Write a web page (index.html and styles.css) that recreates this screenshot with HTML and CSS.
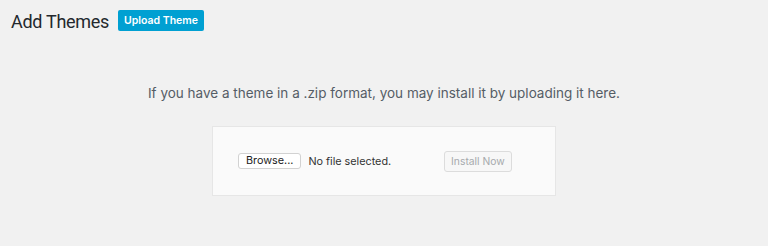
FILE: index.html
```html
<!DOCTYPE html>
<html lang="en">
<head>
  <meta charset="UTF-8">
  <title>Add Themes</title>
  <link rel="stylesheet" href="styles.css">
</head>
<body>
  <div class="wrap">
    <div class="page-head">
      <h1>Add Themes</h1>
      <a class="upload-btn" href="#">Upload Theme</a>
    </div>

    <!-- upload panel -->
    <div class="upload-theme">
      <p class="install-help">If you have a theme in a .zip format, you may install it by uploading it here.</p>
      <form class="upload-form">
        <span class="browse-btn">Browse...</span>
        <span class="file-name">No file selected.</span>
        <button class="install-btn" type="button" disabled>Install Now</button>
      </form>
    </div>
  </div>
</body>
</html>
```

FILE: styles.css
```css
body {
  margin: 0;
  background: #f1f1f1;
  font-family: Inter, "Noto Sans", Arial, sans-serif;
  color: #23282d;
  height: 246px;
  overflow: hidden;
}
.wrap {
  padding: 9px 11px 0 11px;
}
.page-head {
  display: flex;
  align-items: center;
  gap: 9px;
}
h1 {
  margin: 2px 0 0 0;
  font-family: Roboto, Arial, sans-serif;
  font-size: 18px;
  font-weight: 400;
  letter-spacing: -0.3px;
  line-height: 21px;
  color: #23282d;
}
.upload-btn {
  display: inline-block;
  background: #00a0d2;
  color: #fff;
  font-size: 10.5px;
  font-weight: 600;
  text-decoration: none;
  line-height: 21px;
  height: 21px;
  padding: 0 6px;
  border-radius: 2px;
}
.upload-theme {
  text-align: center;
}
.install-help {
  margin: 51px 0 23px 0;
  font-size: 13.5px;
  line-height: 20px;
  color: #555d66;
}
.upload-form {
  width: 344px;
  height: 70px;
  box-sizing: border-box;
  margin: 0 auto;
  background: #fafafa;
  border: 1px solid #e6e6e6;
  display: flex;
  align-items: center;
  padding-left: 25px;
  font-size: 10.8px;
}
.browse-btn {
  background: #fff;
  border: 1px solid #d2d2d2;
  border-radius: 3px;
  height: 14px;
  line-height: 14px;
  padding: 0 7px;
  color: #222;
}
.file-name {
  margin-left: 7px;
  color: #333;
}
.install-btn {
  margin-left: 53px;
  height: 21px;
  padding: 0 6px;
  background: #f7f7f7;
  border: 1px solid #dcdcdc;
  border-radius: 3px;
  color: #a6a9ac;
  font-family: inherit;
  font-size: 10.3px;
}
```
